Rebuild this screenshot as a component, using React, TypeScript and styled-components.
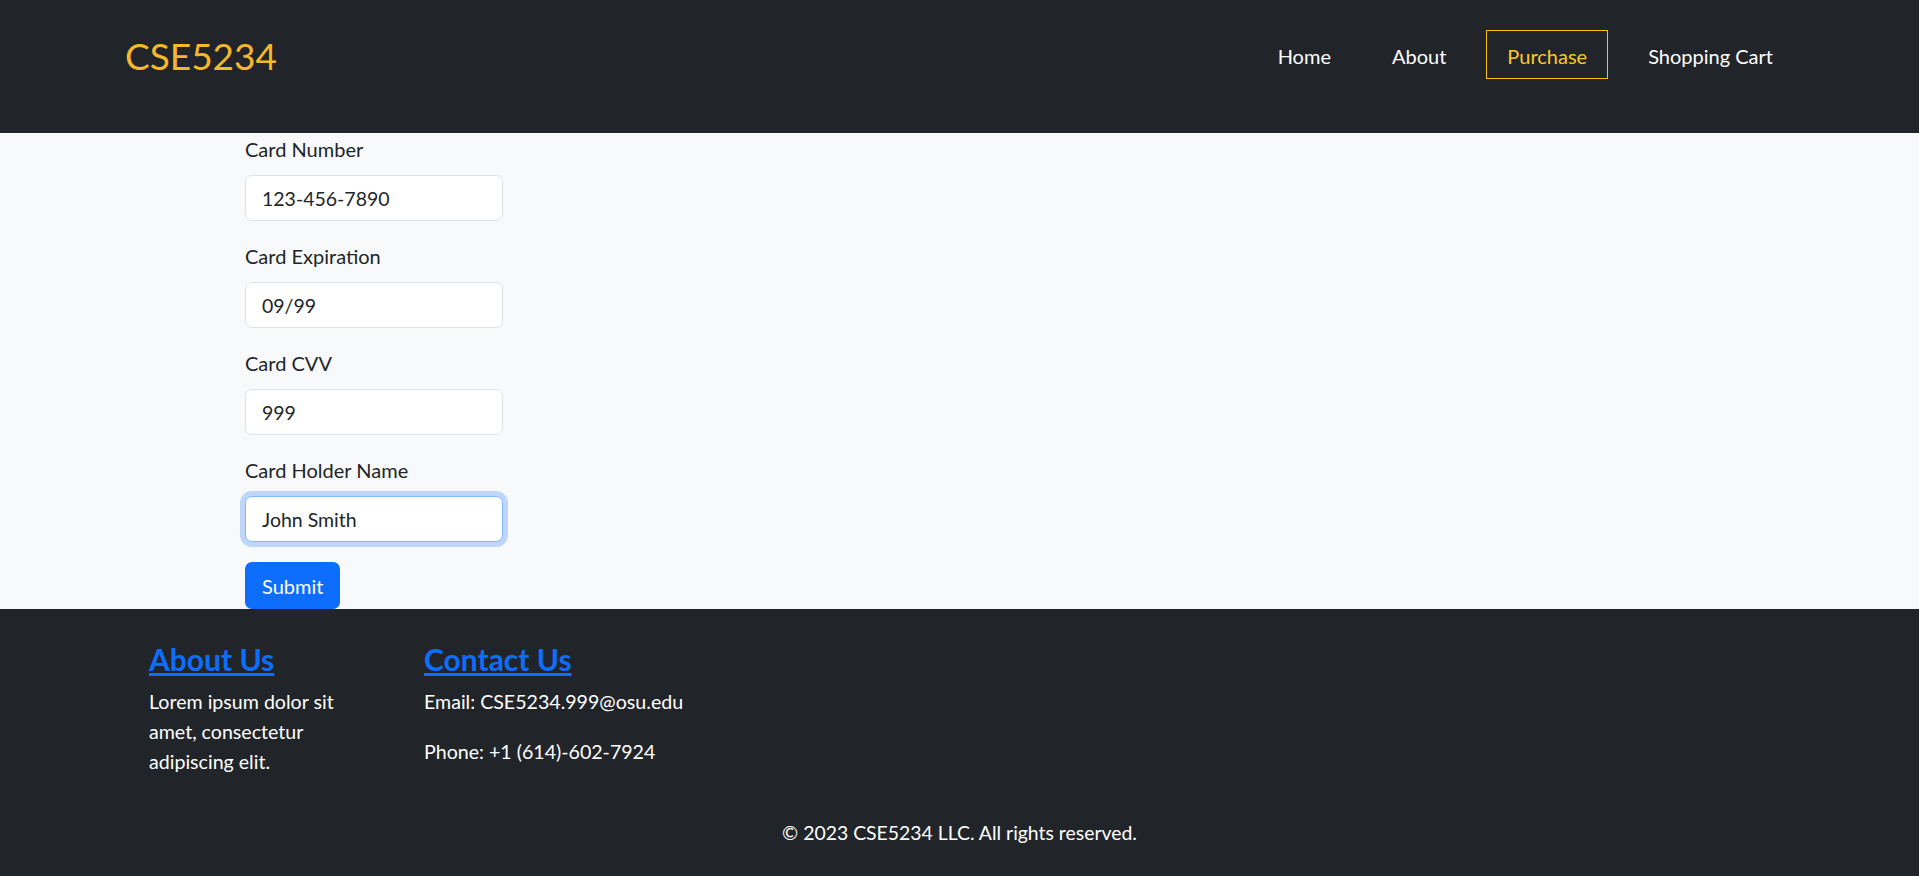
import React, { useEffect, useRef } from "react";
import styled, { createGlobalStyle, css } from "styled-components";

const GlobalStyle = createGlobalStyle`
  *, *::before, *::after { box-sizing: border-box; }
  html, body { margin: 0; padding: 0; }
  body {
    font-family: Lato, "Open Sans", "Noto Sans", sans-serif;
    font-size: 20px;
    line-height: 1.5;
    color: #212529;
    background: #212529;
  }
`;

const Page = styled.div`
  min-height: 876px;
  display: flex;
  flex-direction: column;
`;

const NavBar = styled.header`
  height: 133px;
  background: #212529;
  display: flex;
  justify-content: space-between;
  align-items: flex-start;
  padding: 0 125px;
`;

const Brand = styled.a`
  margin-top: 34px;
  font-size: 37px;
  line-height: 1.2;
  color: #f5b82a;
  text-decoration: none;
`;

const NavList = styled.nav`
  margin-top: 30px;
  display: flex;
  gap: 19px;
`;

const NavLink = styled.a<{ $active?: boolean }>`
  display: block;
  font-size: 20px;
  line-height: 30px;
  padding: 9.5px 20px 7.5px;
  border: 1px solid transparent;
  color: #ffffff;
  text-decoration: none;
  ${(p) =>
    p.$active &&
    css`
      border-color: #ffc107;
      color: #ffc72c;
    `}
`;

const Main = styled.main`
  background: #f8f9fa;
  padding: 1px 0 0 245px;
`;

const Form = styled.form`
  width: 258px;
`;

const Field = styled.div`
  margin-bottom: 20px;
`;

const Label = styled.label`
  display: block;
  line-height: 30px;
  margin-bottom: 11px;
`;

const Input = styled.input<{ $focused?: boolean }>`
  display: block;
  width: 100%;
  height: 46px;
  padding: 0 16px;
  font-family: inherit;
  font-size: 19.5px;
  color: #212529;
  background: #ffffff;
  border: 1px solid #dee2e6;
  border-radius: 7px;
  outline: none;
  ${(p) =>
    p.$focused &&
    css`
      border-color: #86b7fe;
      box-shadow: 0 0 0 5px rgba(13, 110, 253, 0.25);
    `}
`;

const SubmitButton = styled.button`
  display: block;
  height: 47px;
  padding: 0 17px;
  font-family: inherit;
  font-size: 20px;
  color: #ffffff;
  background: #0d6efd;
  border: none;
  border-radius: 7px;
`;

const Footer = styled.footer`
  flex: 1;
  background: #212529;
  color: #ffffff;
  padding: 32px 0 28px;
`;

const FooterColumns = styled.div`
  display: grid;
  grid-template-columns: 275px auto;
  padding-left: 149px;
`;

const FooterCol = styled.section``;

const FooterHeading = styled.h4`
  margin: 0 0 9.5px;
  font-size: 30px;
  line-height: 36px;
  font-weight: 700;
`;

const HeadingLink = styled.a`
  color: #0d6efd;
  text-decoration: underline;
`;

const FooterText = styled.p<{ $narrow?: boolean }>`
  margin: 0 0 20px;
  font-size: 19.6px;
  line-height: 30px;
  ${(p) => p.$narrow && css`max-width: 225px;`}
`;

const Copyright = styled.p`
  margin: 21px 0 0;
  text-align: center;
  font-size: 19.4px;
  line-height: 30px;
`;

export default function App() {
  const nameRef = useRef<HTMLInputElement>(null);
  useEffect(() => {
    const el = nameRef.current;
    if (el) {
      el.focus();
      const n = el.value.length;
      el.setSelectionRange(n, n);
    }
  }, []);

  return (
    <Page>
      <GlobalStyle />
      <NavBar>
        <Brand href="#">CSE5234</Brand>
        <NavList>
          <NavLink href="#">Home</NavLink>
          <NavLink href="#">About</NavLink>
          <NavLink href="#" $active>
            Purchase
          </NavLink>
          <NavLink href="#">Shopping Cart</NavLink>
        </NavList>
      </NavBar>
      <Main>
        <Form onSubmit={(e) => e.preventDefault()}>
          <Field>
            <Label htmlFor="cardNumber">Card Number</Label>
            <Input id="cardNumber" type="text" defaultValue="123-456-7890" />
          </Field>
          <Field>
            <Label htmlFor="cardExp">Card Expiration</Label>
            <Input id="cardExp" type="text" defaultValue="09/99" />
          </Field>
          <Field>
            <Label htmlFor="cardCvv">Card CVV</Label>
            <Input id="cardCvv" type="text" defaultValue="999" />
          </Field>
          <Field>
            <Label htmlFor="cardName">Card Holder Name</Label>
            <Input id="cardName" type="text" defaultValue="John Smith" ref={nameRef} $focused />
          </Field>
          <SubmitButton type="submit">Submit</SubmitButton>
        </Form>
      </Main>
      <Footer>
        <FooterColumns>
          <FooterCol>
            <FooterHeading>
              <HeadingLink href="#">About Us</HeadingLink>
            </FooterHeading>
            <FooterText $narrow>Lorem ipsum dolor sit amet, consectetur adipiscing elit.</FooterText>
          </FooterCol>
          <FooterCol>
            <FooterHeading>
              <HeadingLink href="#">Contact Us</HeadingLink>
            </FooterHeading>
            <FooterText>Email: CSE5234.999@osu.edu</FooterText>
            <FooterText>Phone: +1 (614)-602-7924</FooterText>
          </FooterCol>
        </FooterColumns>
        <Copyright>© 2023 CSE5234 LLC. All rights reserved.</Copyright>
      </Footer>
    </Page>
  );
}
